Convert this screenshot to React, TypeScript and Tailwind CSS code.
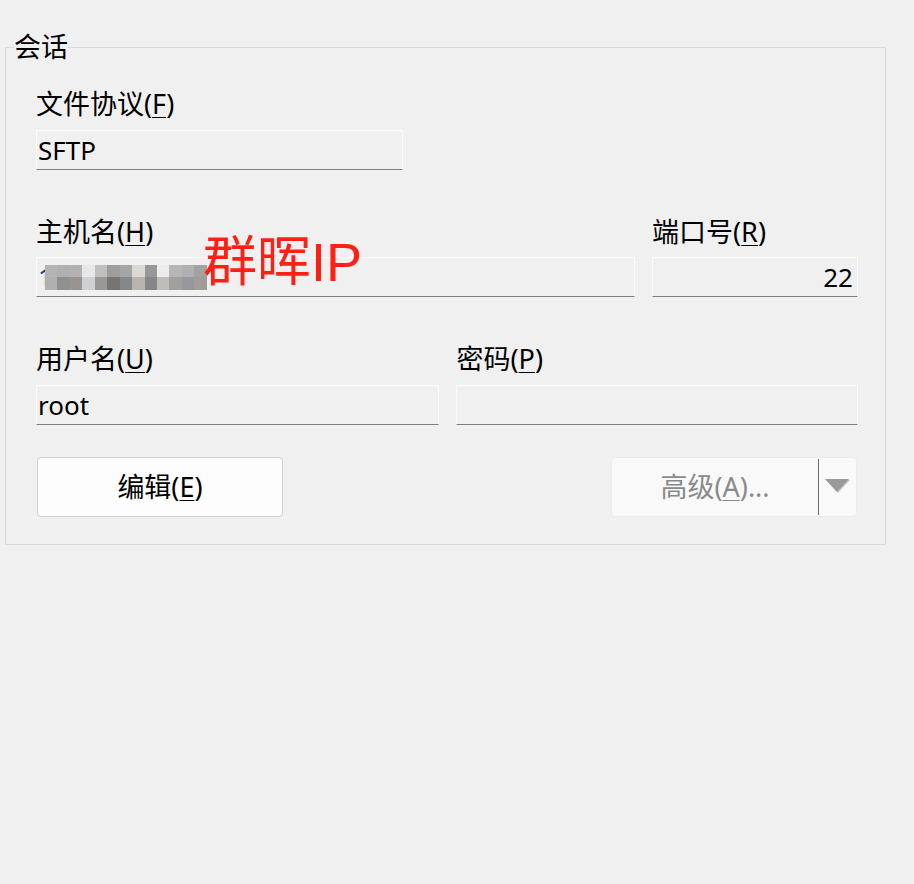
import React from 'react';

const mosaicTop = ['#b4b4b6', '#b0b0b0', '#b4b2b0', '#e8e8ea', '#c0bfbc', '#a09e9c', '#a4a6a8', '#dcd8d4', '#98989a', '#ececec', '#b8b6b4', '#b0b0b2', '#a4a2a0'];
const mosaicBottom = ['#b0b0b0', '#909090', '#989490', '#d0d0d2', '#989898', '#787470', '#848888', '#b8b4b0', '#848688', '#c0bcb8', '#a0a0a0', '#98989c', '#a09c98'];

function Label({ text, mnemonic }: { text: string; mnemonic: string }) {
  return (
    <div className="h-[30px] leading-[30px] text-[27px] text-black whitespace-nowrap">
      {text}(<span className="underline underline-offset-[3px] decoration-1">{mnemonic}</span>)
    </div>
  );
}

function Field({ children, right }: { children?: React.ReactNode; right?: boolean }) {
  return (
    <div
      className={
        'h-[40px] border border-[#fbfbfb] border-b-[#7e7e7e] bg-[#f0f0f0] flex items-center text-[26px] text-black ' +
        (right ? 'justify-end pr-[4px]' : 'pl-[1px]')
      }
    >
      {children}
    </div>
  );
}

export default function App() {
  return (
    <div className="relative h-[884px] w-full bg-[#f0f0f0] pt-[32px] pl-[5px] font-['Noto_Sans','Noto_Sans_CJK_SC',sans-serif]">
      <fieldset className="w-[881px] border border-[#d9d9d9]">
        <legend className="ml-[8px] h-[30px] leading-[30px] text-[27px] text-black">会话</legend>

        <div className="pl-[30px] pr-[27px] pt-[27px] pb-[27px]">
          <Label text="文件协议" mnemonic="F" />
          <div className="mt-[11px] w-[367px]">
            <Field>SFTP</Field>
          </div>

          <div className="mt-[47px] grid grid-cols-[1fr_206px] gap-x-[17px]">
            <div>
              <Label text="主机名" mnemonic="H" />
              <div className="mt-[10px]">
                <Field>
                  <span className="text-[#1a3a8a]">1</span>
                  <div className="relative ml-[-8px] grid grid-cols-13 w-[162px] h-[25px]">
                    {mosaicTop.concat(mosaicBottom).map((c, i) => (
                      <div key={i} style={{ backgroundColor: c }} />
                    ))}
                  </div>
                </Field>
              </div>
            </div>
            <div>
              <Label text="端口号" mnemonic="R" />
              <div className="mt-[10px]">
                <Field right>22</Field>
              </div>
            </div>
          </div>

          <div className="mt-[47px] grid grid-cols-2 gap-x-[17px]">
            <div>
              <Label text="用户名" mnemonic="U" />
              <div className="mt-[11px]">
                <Field>root</Field>
              </div>
            </div>
            <div>
              <div className="pl-[1px]">
                <Label text="密码" mnemonic="P" />
              </div>
              <div className="mt-[11px]">
                <Field />
              </div>
            </div>
          </div>

          <div className="mt-[32px] flex justify-between">
            <button className="ml-[1px] h-[60px] w-[246px] rounded-[4px] border border-[#d0d0d0] bg-[#fdfdfd] text-[27px] text-black">
              编辑(<span className="underline underline-offset-[3px] decoration-1">E</span>)
            </button>
            <div className="mr-[1px] flex h-[60px] w-[246px] rounded-[4px] border border-[#ececec] bg-[#f9f9f9]">
              <div className="flex flex-1 items-center justify-center text-[27px] text-[#8a8a8a]">
                高级(<span className="underline underline-offset-[3px] decoration-1">A</span>)...
              </div>
              <div className="my-[1px] w-px bg-[#6e6e6e]" />
              <div className="flex w-[37px] items-center justify-center">
                <svg width="26" height="16" viewBox="0 0 26 16">
                  <polygon points="1,1 25,1 13,14" fill="#c8c8c8" />
                  <polygon points="0,0 24,0 12,13" fill="#9a9a9a" />
                </svg>
              </div>
            </div>
          </div>
        </div>
      </fieldset>

      <div className="absolute left-[203px] top-[232px] text-[54px] leading-[60px] text-[#ff2015] font-['Liberation_Sans','Noto_Sans_CJK_SC',sans-serif]">
        群晖IP
      </div>
    </div>
  );
}
